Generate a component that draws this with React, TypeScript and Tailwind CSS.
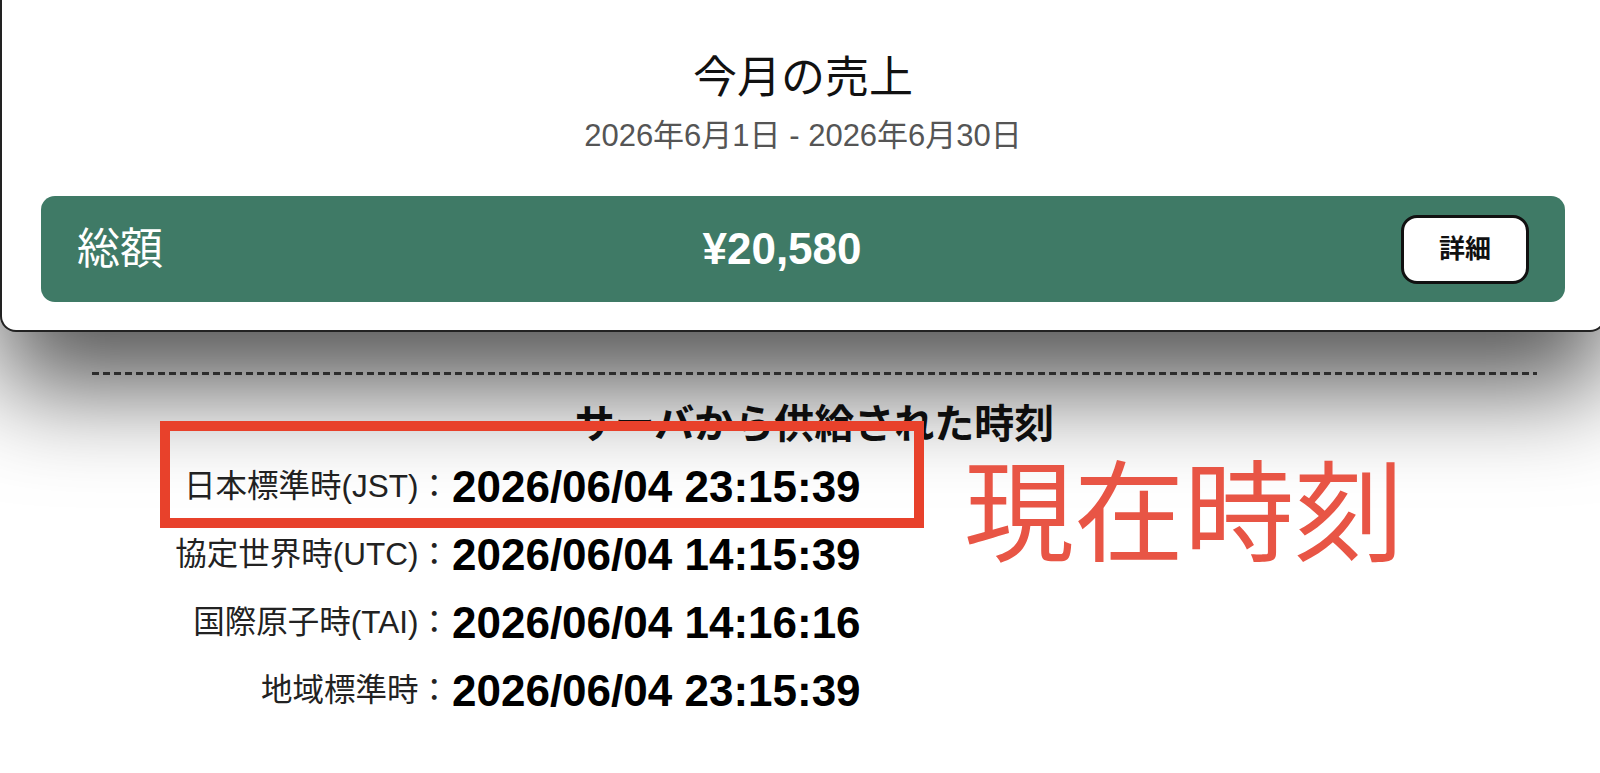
import React from 'react';

interface TimeRow {
  label: string;
  value: string;
}

const timeRows: TimeRow[] = [
  { label: '日本標準時(JST)：', value: '2026/06/04 23:15:39' },
  { label: '協定世界時(UTC)：', value: '2026/06/04 14:15:39' },
  { label: '国際原子時(TAI)：', value: '2026/06/04 14:16:16' },
  { label: '地域標準時：', value: '2026/06/04 23:15:39' },
];

const App: React.FC = () => {
  return (
    <div className="relative min-h-[773px] w-[1600px] overflow-hidden bg-white font-['Liberation_Sans','Noto_Sans_CJK_JP',sans-serif] text-[#111]">
      {/* Sales card */}
      <div className="relative z-10 w-[1606px] rounded-b-[16px] border-2 border-t-0 border-[#222] bg-white px-[39px] pt-[56px] pb-[28px] shadow-[0_56px_100px_rgba(0,0,0,0.66)]">
        <h1 className="text-center text-[44px] leading-[44px] text-[#111]">今月の売上</h1>
        <p className="mt-[21px] text-center text-[31px] leading-[30px] text-[#555]">
          2026年6月1日 - 2026年6月30日
        </p>

        <div className="mt-[45px] flex h-[106px] items-center justify-between rounded-[14px] bg-[#3f7a66] px-[36px] text-white">
          <span className="text-[43px] leading-none">総額</span>
          <span className="text-[44px] font-bold leading-none">¥20,580</span>
          <button className="flex h-[69px] w-[128px] items-center justify-center rounded-[16px] border-[3px] border-[#111] bg-white text-[26px] font-bold text-[#111]">
            詳細
          </button>
        </div>
      </div>

      {/* Server time section */}
      <div className="ml-[92px] w-[1445px] pt-[40px]">
        <div className="h-[3px] bg-[repeating-linear-gradient(to_right,#4a4a4a_0_7px,transparent_7px_11px)]" />

        <h2 className="mt-[29px] text-center text-[40px] font-bold leading-[40px] text-[#111]">
          サーバから供給された時刻
        </h2>

        <div className="mt-[9px] grid grid-cols-[358px_auto] justify-start">
          {timeRows.map(row => (
            <React.Fragment key={row.label}>
              <div className="flex h-[68px] items-center justify-end text-[31.5px] text-[#222]">{row.label}</div>
              <div className="flex h-[68px] items-center pl-[2px] text-[44px] font-bold text-black">{row.value}</div>
            </React.Fragment>
          ))}
        </div>
      </div>

      {/* Annotation overlay */}
      <div className="pointer-events-none absolute left-[160px] top-[421px] z-20 h-[107px] w-[764px] border-[10px] border-[#e8412b]" />
      <div className="pointer-events-none absolute left-[964px] top-[460px] z-20 text-[110px] leading-none text-[#e85545]">
        現在時刻
      </div>
    </div>
  );
};

export default App;
